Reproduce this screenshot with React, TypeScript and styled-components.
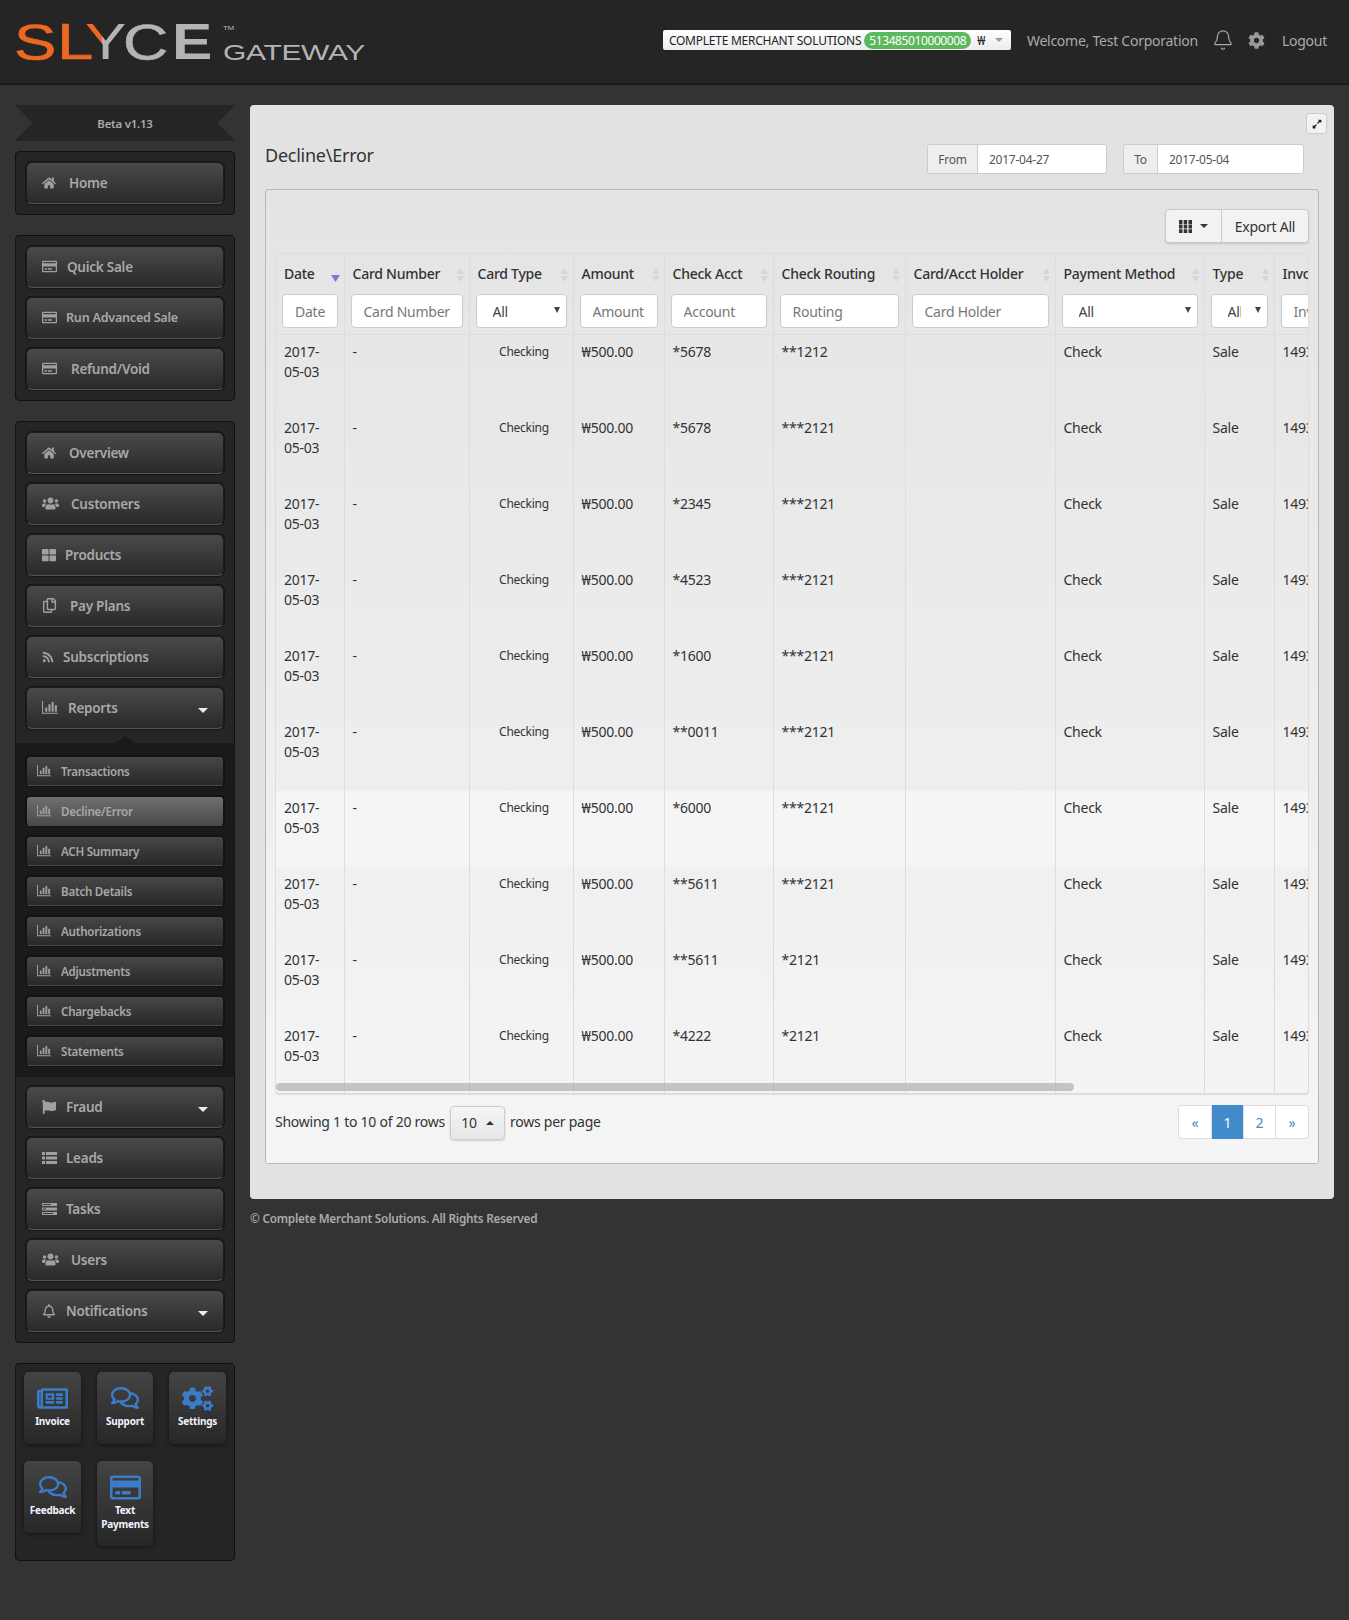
import { ReactNode } from "react";
import styled, { createGlobalStyle } from "styled-components";
import {
  FaHome, FaRegCreditCard, FaUsers, FaThLarge, FaRegCopy, FaRss, FaFlag,
  FaRegBell, FaCog, FaCogs, FaRegNewspaper, FaRegComments, FaExpandAlt,
} from "react-icons/fa";
import { Bell } from "lucide-react";

const GlobalStyle = createGlobalStyle`
  html, body { margin: 0; padding: 0; background: #333; }
  body { font-family: "Noto Sans", "Open Sans", sans-serif; font-size: 14px; letter-spacing: -0.25px; color: #333; min-height: 1620px; }
  input { letter-spacing: inherit; }
  * { box-sizing: border-box; }
`;

const Header = styled.header`
  height: 85px;
  background: #252525;
  border-bottom: 2px solid #1b1b1b;
  display: flex;
  align-items: flex-start;
  justify-content: space-between;
  padding: 0 22px 0 15px;
`;
const LogoSvg = styled.svg`
  width: 352px;
  height: 66px;
  display: block;
`;
const HeaderRight = styled.div`
  display: flex;
  align-items: center;
  margin-top: 30px;
  height: 20px;
  color: #aaa;
`;
const MerchantSelect = styled.div`
  width: 348px;
  height: 20px;
  background: linear-gradient(#fff, #ececec);
  border-radius: 2px;
  display: flex;
  align-items: center;
  padding-left: 6px;
  font-size: 12px;
  color: #222;
  white-space: nowrap;
  margin-right: 16px;
`;
const Badge = styled.span`
  background: #5cb85c;
  color: #fff;
  border-radius: 9px;
  height: 17px;
  line-height: 17px;
  width: 107px;
  text-align: center;
  margin-left: 3px;
  letter-spacing: -0.4px;
`;
const Won = styled.span`
  margin-left: 6px;
`;
const SmallCaret = styled.span`
  width: 0;
  height: 0;
  margin-left: 10px;
  border-left: 4px solid transparent;
  border-right: 4px solid transparent;
  border-top: 4px solid #999;
`;
const HeaderText = styled.span<{ $ml?: number }>`
  margin-left: ${(p) => p.$ml ?? 0}px;
  white-space: nowrap;
  display: flex;
  align-items: center;
`;
const Layout = styled.div`
  display: flex;
  align-items: flex-start;
  gap: 15px;
  padding: 20px 15px;
`;
const Sidebar = styled.aside`
  width: 220px;
  flex: none;
  display: flex;
  flex-direction: column;
  gap: 20px;
`;
const Ribbon = styled.div`
  height: 36px;
  margin-bottom: -10px;
  background: #252525;
  color: #aaa;
  font-size: 11.5px;
  font-weight: 600;
  display: flex;
  align-items: center;
  justify-content: center;
  clip-path: polygon(0 0, 100% 0, 92% 50%, 100% 100%, 0 100%, 8% 50%);
`;
const Panel = styled.nav`
  background: #252525;
  border: 1px solid #111;
  border-radius: 4px;
  padding: 10px;
  display: flex;
  flex-direction: column;
  gap: 9px;
`;
const NavButton = styled.a`
  height: 42px;
  flex: none;
  display: flex;
  align-items: center;
  padding: 0 0 1px 15px;
  border: 1px solid #1c1c1c;
  border-bottom-color: #555;
  border-radius: 6px;
  background: linear-gradient(#4a4a4a, #292929);
  box-shadow: 0 0 0 1px #161616;
  color: #a8a8a8;
  font-weight: 600;
  font-size: 13.5px;
  position: relative;
  svg { color: #a0a0a0; flex: none; }
`;
const NavLabel = styled.span<{ $gap: number; $size?: number }>`
  margin-left: ${(p) => p.$gap}px;
  ${(p) => (p.$size ? `font-size: ${p.$size}px;` : "")}
`;
const NavCaret = styled.span`
  position: absolute;
  right: 15px;
  top: 20px;
  width: 0;
  height: 0;
  border-left: 5px solid transparent;
  border-right: 5px solid transparent;
  border-top: 5px solid #eee;
`;
const SubSection = styled.div`
  margin: 5px -10px 0;
  padding: 13px 10px 11px;
  background: #1a1a1a;
  display: flex;
  flex-direction: column;
  gap: 10px;
  position: relative;
  &::before {
    content: "";
    position: absolute;
    top: -7px;
    left: 50%;
    margin-left: -10px;
    border-left: 10px solid transparent;
    border-right: 10px solid transparent;
    border-bottom: 7px solid #1a1a1a;
  }
`;
const SubButton = styled.a<{ $active?: boolean }>`
  height: 30px;
  display: flex;
  align-items: center;
  padding-left: 10px;
  border: 1px solid #141414;
  border-bottom-color: #4a4a4a;
  border-radius: 4px;
  background: ${(p) => (p.$active ? "linear-gradient(#6f6f6f, #4a4a4a)" : "linear-gradient(#474747, #282828)")};
  box-shadow: 0 0 0 1px #121212;
  color: #a8a8a8;
  font-size: 11.6px;
  font-weight: 600;
  svg { color: #a0a0a0; flex: none; }
`;
const SubLabel = styled.span`
  margin-left: 10px;
`;
const TilePanel = styled.div`
  background: #252525;
  border: 1px solid #111;
  border-radius: 4px;
  padding: 8px 8px 14px;
  display: grid;
  grid-template-columns: 57px 56px 57px;
  column-gap: 16px;
  row-gap: 17px;
  align-items: start;
`;
const Tile = styled.a`
  min-height: 72px;
  padding: 12px 0 15px;
  border-radius: 5px;
  background: linear-gradient(#444, #272727);
  box-shadow: 0 1px 4px rgba(0, 0, 0, 0.5);
  color: #f0f4ff;
  font-size: 10px;
  line-height: 14px;
  font-weight: 700;
  text-align: center;
  display: flex;
  flex-direction: column;
  align-items: center;
  gap: 2px;
`;
const TileIcon = styled.span`
  height: 28px;
  display: flex;
  align-items: center;
  color: #3b7cc9;
`;
const Main = styled.div`
  flex: 1;
  min-width: 0;
`;
const MainPanel = styled.section`
  background: #e2e2e2;
  border-radius: 4px;
  padding: 39px 15px 35px;
  height: 1094px;
  position: relative;
`;
const ExpandButton = styled.a`
  position: absolute;
  top: 8px;
  right: 7px;
  width: 21px;
  height: 21px;
  background: #f2f2f2;
  border: 1px solid #ccc;
  border-radius: 3px;
  display: flex;
  align-items: center;
  justify-content: center;
  color: #222;
`;
const TitleRow = styled.div`
  height: 30px;
  margin-bottom: 15px;
  display: flex;
  align-items: center;
  padding-right: 15px;
`;
const Title = styled.h1`
  margin: 0 auto 8px 0;
  font-size: 18px;
  font-weight: 400;
  color: #333;
`;
const DateGroup = styled.div`
  display: flex;
  height: 30px;
  margin-left: 16px;
  border: 1px solid #ccc;
  border-radius: 3px;
  overflow: hidden;
  font-size: 12px;
`;
const DateAddon = styled.span<{ $w: number }>`
  width: ${(p) => p.$w}px;
  background: #eee;
  border-right: 1px solid #ccc;
  color: #555;
  display: flex;
  align-items: center;
  justify-content: center;
`;
const DateInput = styled.input<{ $w: number }>`
  width: ${(p) => p.$w}px;
  border: 0;
  background: #fff;
  padding: 0 11px;
  font: inherit;
  color: #555;
  outline: none;
`;
const Card = styled.div`
  height: 975px;
  border: 1px solid #b9b9b9;
  border-radius: 3px;
  background: linear-gradient(#e4e4e4, #f5f5f5);
  padding: 19px 9px 0;
`;
const Toolbar = styled.div`
  display: flex;
  justify-content: flex-end;
  height: 34px;
  margin-bottom: 10px;
`;
const ToolGroup = styled.div`
  display: flex;
  border: 1px solid #ccc;
  border-radius: 4px;
  background: #f2f2f2;
  box-shadow: 0 1px 2px rgba(0, 0, 0, 0.15);
  color: #333;
`;
const ToolButton = styled.a<{ $w: number }>`
  width: ${(p) => p.$w}px;
  display: flex;
  align-items: center;
  justify-content: center;
  gap: 8px;
  & + & { border-left: 1px solid #ccc; }
`;
const DarkCaret = styled.span<{ $up?: boolean }>`
  width: 0;
  height: 0;
  border-left: 4px solid transparent;
  border-right: 4px solid transparent;
  ${(p) => (p.$up ? "border-bottom: 4px solid #333;" : "border-top: 4px solid #333;")}
`;
const TableWrap = styled.div`
  height: 842px;
  border: 1px solid #ddd;
  border-bottom-width: 2px;
  border-radius: 4px;
  overflow: hidden;
  position: relative;
`;
const Scrollbar = styled.div`
  position: absolute;
  left: 0;
  bottom: 2px;
  width: 798px;
  height: 8px;
  border-radius: 4px;
  background: rgba(170, 170, 170, 0.65);
`;
const Table = styled.table`
  border-collapse: collapse;
  table-layout: fixed;
  width: 1338px;
  height: 840px;
`;
const Col = styled.col<{ $w: number }>`
  width: ${(p) => p.$w}px;
`;
const HeadCell = styled.th`
  height: 40px;
  padding: 0 8px 2px;
  text-align: left;
  font-weight: 500;
  color: #333;
  border-right: 1px solid #ddd;
  position: relative;
  white-space: nowrap;
  overflow: hidden;
`;
const SortIcon = styled.svg`
  position: absolute;
  right: 4px;
  top: 13px;
`;
const FilterCell = styled.td`
  height: 40px;
  padding: 0 6px 6px;
  vertical-align: top;
  border-right: 1px solid #ddd;
  border-bottom: 1px solid #ddd;
`;
const FilterInput = styled.input`
  width: 100%;
  height: 34px;
  border: 1px solid #ccc;
  border-radius: 4px;
  background: #fff;
  padding: 0 12px;
  font: inherit;
  outline: none;
  &::placeholder { color: #777; opacity: 1; }
`;
const FilterSelect = styled.div`
  height: 34px;
  border: 1px solid #ccc;
  border-radius: 4px;
  background: #fff;
  padding: 0 26px 0 16px;
  display: flex;
  align-items: center;
  color: #444;
  position: relative;
  span { overflow: hidden; white-space: nowrap; }
  &::after {
    content: "";
    position: absolute;
    right: 6px;
    top: 12px;
    border-left: 3px solid transparent;
    border-right: 3px solid transparent;
    border-top: 6px solid #444;
  }
`;
const Row = styled.tr<{ $hover?: boolean }>`
  ${(p) => (p.$hover ? "background: #f5f5f5;" : "")}
`;
const Cell = styled.td<{ $small?: boolean }>`
  height: 76px;
  padding: 7px 8px 8px;
  vertical-align: top;
  line-height: 20px;
  border-right: 1px solid #ddd;
  color: #333;
  overflow: hidden;
  white-space: ${(p) => (p.$small ? "nowrap" : "normal")};
  ${(p) => (p.$small ? "font-size: 12px; text-align: center; padding-left: 14px;" : "")}
`;
const Foot = styled.div`
  display: flex;
  align-items: center;
  margin-top: 10px;
  height: 34px;
  padding-bottom: 2px;
`;
const PageSize = styled.a`
  width: 55px;
  height: 34px;
  margin: 3px 5px 0 5px;
  border: 1px solid #ccc;
  border-radius: 4px;
  background: linear-gradient(#f5f5f5, #e6e6e6);
  box-shadow: 0 1px 2px rgba(0, 0, 0, 0.15);
  display: flex;
  align-items: center;
  justify-content: center;
  gap: 9px;
`;
const Pager = styled.div`
  margin-left: auto;
  margin-bottom: -2px;
  display: flex;
  height: 34px;
  border: 1px solid #ddd;
  border-radius: 4px;
  background: #fff;
  color: #428bca;
`;
const PageLink = styled.a<{ $active?: boolean; $w: number }>`
  width: ${(p) => p.$w}px;
  display: flex;
  align-items: center;
  justify-content: center;
  ${(p) => (p.$active ? "background: #428bca; color: #fff; margin: -1px 0;" : "")}
  & + & { border-left: 1px solid #ddd; }
`;
const Footer = styled.div`
  margin-top: 10px;
  height: 18px;
  line-height: 18px;
  font-size: 11.8px;
  font-weight: 600;
  color: #aaa;
`;

// FA4 style glyphs which the packages only have in a different cut
const ChartIcon = ({ w }: { w: number }) => (
  <svg width={w} height={w * 0.8} viewBox="0 0 15 12" fill="currentColor">
    <path d="M0 0h1v11h14v1H0z" />
    <path d="M3 6h2v4H3zM6 3h2v7H6zM9 1h2v9H9zM12 4h2v6h-2z" />
  </svg>
);
const ListIcon = () => (
  <svg width="15" height="12" viewBox="0 0 15 12" fill="currentColor">
    <path d="M0 0h3v3H0zM4 0h11v3H4zM0 4.5h3v3H0zM4 4.5h11v3H4zM0 9h3v3H0zM4 9h11v3H4z" />
  </svg>
);
const TasksIcon = () => (
  <svg width="15" height="12" viewBox="0 0 15 12" fill="currentColor">
    <path d="M0 0h15v3H0zM1 1v1h8V1zM0 4.5h15v3H0zM1 5.5v1h3v-1zM0 9h15v3H0zM1 10v1h10v-1z" fillRule="evenodd" />
  </svg>
);
const ColumnsIcon = () => (
  <svg width="13" height="13" viewBox="0 0 13 13" fill="currentColor">
    <path d="M0 0h3.5v4H0zM4.7 0h3.5v4H4.7zM9.5 0H13v4H9.5zM0 4.6h3.5v4H0zM4.7 4.6h3.5v4H4.7zM9.5 4.6H13v4H9.5zM0 9.2h3.5V13H0zM4.7 9.2h3.5V13H4.7zM9.5 9.2H13V13H9.5z" />
  </svg>
);

interface INavItem {
  label: string;
  icon: ReactNode;
  gap: number;
  caret?: boolean;
  size?: number;
}

const card = <FaRegCreditCard size={15} />;

const quickItems: INavItem[] = [
  { label: "Quick Sale", icon: card, gap: 10 },
  { label: "Run Advanced Sale", icon: card, gap: 9, size: 12.6 },
  { label: "Refund/Void", icon: card, gap: 14 },
];
const topItems: INavItem[] = [
  { label: "Overview", icon: <FaHome size={14} />, gap: 13 },
  { label: "Customers", icon: <FaUsers size={17} />, gap: 12 },
  { label: "Products", icon: <FaThLarge size={14} />, gap: 9 },
  { label: "Pay Plans", icon: <FaRegCopy size={15} />, gap: 13 },
  { label: "Subscriptions", icon: <FaRss size={12} />, gap: 9 },
  { label: "Reports", icon: <ChartIcon w={16} />, gap: 10, caret: true },
];
const subItems = ["Transactions", "Decline/Error", "ACH Summary", "Batch Details", "Authorizations", "Adjustments", "Chargebacks", "Statements"];
const bottomItems: INavItem[] = [
  { label: "Fraud", icon: <FaFlag size={14} />, gap: 10, caret: true },
  { label: "Leads", icon: <ListIcon />, gap: 9 },
  { label: "Tasks", icon: <TasksIcon />, gap: 9 },
  { label: "Users", icon: <FaUsers size={17} />, gap: 12 },
  { label: "Notifications", icon: <FaRegBell size={14} />, gap: 10, caret: true },
];
const tiles: { label: ReactNode; icon: ReactNode }[] = [
  { label: "Invoice", icon: <FaRegNewspaper size={31} /> },
  { label: "Support", icon: <FaRegComments size={28} /> },
  { label: "Settings", icon: <FaCogs size={31} /> },
  { label: "Feedback", icon: <FaRegComments size={28} /> },
  { label: <>Text<br />Payments</>, icon: <FaRegCreditCard size={31} /> },
];

const columns = [
  { title: "Date", width: 68, filter: "Date" },
  { title: "Card Number", width: 125, filter: "Card Number" },
  { title: "Card Type", width: 104, select: true },
  { title: "Amount", width: 91, filter: "Amount" },
  { title: "Check Acct", width: 109, filter: "Account" },
  { title: "Check Routing", width: 132, filter: "Routing" },
  { title: "Card/Acct Holder", width: 150, filter: "Card Holder" },
  { title: "Payment Method", width: 149, select: true },
  { title: "Type", width: 70, select: true },
  { title: "Invoice", width: 340, filter: "Invoice" },
];
const rows = [
  ["*5678", "**1212"],
  ["*5678", "***2121"],
  ["*2345", "***2121"],
  ["*4523", "***2121"],
  ["*1600", "***2121"],
  ["**0011", "***2121"],
  ["*6000", "***2121"],
  ["**5611", "***2121"],
  ["**5611", "*2121"],
  ["*4222", "*2121"],
];

const Logo = () => (
  <LogoSvg viewBox="0 0 352 66">
    <defs>
      <linearGradient id="ybar" x1="0" y1="0" x2="1" y2="0">
        <stop offset="0.42" stopColor="#ee6723" />
        <stop offset="0.42" stopColor="#b4b4b4" />
      </linearGradient>
    </defs>
    <g fontFamily="Liberation Sans, sans-serif" fontSize="50">
      <text x="-1" y="60" fill="#ee6723" stroke="#ee6723" strokeWidth="0.6" textLength="42" lengthAdjust="spacingAndGlyphs">S</text>
      <text x="42" y="59" fill="#ee6723" stroke="#ee6723" strokeWidth="0.6" textLength="36" lengthAdjust="spacingAndGlyphs">L</text>
      <text x="70" y="59" fill="url(#ybar)" textLength="41" lengthAdjust="spacingAndGlyphs">Y</text>
      <text x="108" y="60" fill="#b4b4b4" stroke="#b4b4b4" strokeWidth="0.6" textLength="45" lengthAdjust="spacingAndGlyphs">C</text>
      <text x="157" y="59" fill="#b4b4b4" fontWeight="700" textLength="40" lengthAdjust="spacingAndGlyphs">E</text>
      <text x="208" y="30" fill="#b4b4b4" fontSize="6" textLength="11" lengthAdjust="spacingAndGlyphs">TM</text>
      <text x="208" y="60" fill="#b4b4b4" fontSize="22" textLength="142" lengthAdjust="spacingAndGlyphs">GATEWAY</text>
    </g>
  </LogoSvg>
);

const Sort = ({ active }: { active?: boolean }) => (
  <SortIcon width="9" height="16" viewBox="0 0 9 16">
    {active ? <path d="M0 8h9l-4.5 7z" fill="#7b7bd8" /> : <path d="M4.5 1L8 7H1zM4.5 15L1 9h7z" fill="#d6d6d6" />}
  </SortIcon>
);

const App = () => (
  <>
    <GlobalStyle />
    <Header>
      <Logo />
      <HeaderRight>
        <MerchantSelect>
          COMPLETE MERCHANT SOLUTIONS
          <Badge>513485010000008</Badge>
          <Won>₩</Won>
          <SmallCaret />
        </MerchantSelect>
        <HeaderText>Welcome, Test Corporation</HeaderText>
        <HeaderText $ml={14}><Bell size={22} strokeWidth={1.3} /></HeaderText>
        <HeaderText $ml={14}><FaCog size={17} color="#9a9a9a" /></HeaderText>
        <HeaderText $ml={17}>Logout</HeaderText>
      </HeaderRight>
    </Header>
    <Layout>
      <Sidebar>
        <Ribbon>Beta v1.13</Ribbon>
        <Panel>
          <NavButton><FaHome size={14} /><NavLabel $gap={13}>Home</NavLabel></NavButton>
        </Panel>
        <Panel>
          {quickItems.map((item) => (
            <NavButton key={item.label}>{item.icon}<NavLabel $gap={item.gap} $size={item.size}>{item.label}</NavLabel></NavButton>
          ))}
        </Panel>
        <Panel>
          {topItems.map((item) => (
            <NavButton key={item.label}>
              {item.icon}<NavLabel $gap={item.gap}>{item.label}</NavLabel>
              {item.caret && <NavCaret />}
            </NavButton>
          ))}
          <SubSection>
            {subItems.map((label) => (
              <SubButton key={label} $active={label === "Decline/Error"}><ChartIcon w={14} /><SubLabel>{label}</SubLabel></SubButton>
            ))}
          </SubSection>
          {bottomItems.map((item) => (
            <NavButton key={item.label}>
              {item.icon}<NavLabel $gap={item.gap}>{item.label}</NavLabel>
              {item.caret && <NavCaret />}
            </NavButton>
          ))}
        </Panel>
        <TilePanel>
          {tiles.map((tile, key) => (
            <Tile key={key}><TileIcon>{tile.icon}</TileIcon><span>{tile.label}</span></Tile>
          ))}
        </TilePanel>
      </Sidebar>
      <Main>
        <MainPanel>
          <ExpandButton><FaExpandAlt size={10} /></ExpandButton>
          <TitleRow>
            <Title>Decline\Error</Title>
            <DateGroup>
              <DateAddon $w={50}>From</DateAddon>
              <DateInput $w={128} readOnly value="2017-04-27" />
            </DateGroup>
            <DateGroup>
              <DateAddon $w={34}>To</DateAddon>
              <DateInput $w={145} readOnly value="2017-05-04" />
            </DateGroup>
          </TitleRow>
          <Card>
            <Toolbar>
              <ToolGroup>
                <ToolButton $w={55}><ColumnsIcon /><DarkCaret /></ToolButton>
                <ToolButton $w={87}>Export All</ToolButton>
              </ToolGroup>
            </Toolbar>
            <TableWrap>
              <Table>
                <colgroup>
                  {columns.map((c) => <Col key={c.title} $w={c.width} />)}
                </colgroup>
                <thead>
                  <tr>
                    {columns.map((c, i) => (
                      <HeadCell key={c.title}>{c.title}<Sort active={i === 0} /></HeadCell>
                    ))}
                  </tr>
                  <tr>
                    {columns.map((c) => (
                      <FilterCell key={c.title}>
                        {c.select ? <FilterSelect><span>All</span></FilterSelect> : <FilterInput placeholder={c.filter} />}
                      </FilterCell>
                    ))}
                  </tr>
                </thead>
                <tbody>
                  {rows.map((row, key) => (
                    <Row key={key} $hover={key === 6}>
                      <Cell>2017-05-03</Cell>
                      <Cell>-</Cell>
                      <Cell $small>Checking</Cell>
                      <Cell>₩500.00</Cell>
                      <Cell>{row[0]}</Cell>
                      <Cell>{row[1]}</Cell>
                      <Cell />
                      <Cell>Check</Cell>
                      <Cell>Sale</Cell>
                      <Cell>1493846400</Cell>
                    </Row>
                  ))}
                </tbody>
              </Table>
              <Scrollbar />
            </TableWrap>
            <Foot>
              Showing 1 to 10 of 20 rows
              <PageSize>10 <DarkCaret $up /></PageSize>
              rows per page
              <Pager>
                <PageLink $w={32}>«</PageLink>
                <PageLink $w={32} $active>1</PageLink>
                <PageLink $w={32}>2</PageLink>
                <PageLink $w={33}>»</PageLink>
              </Pager>
            </Foot>
          </Card>
        </MainPanel>
        <Footer>© Complete Merchant Solutions. All Rights Reserved</Footer>
      </Main>
    </Layout>
  </>
);

export default App;
